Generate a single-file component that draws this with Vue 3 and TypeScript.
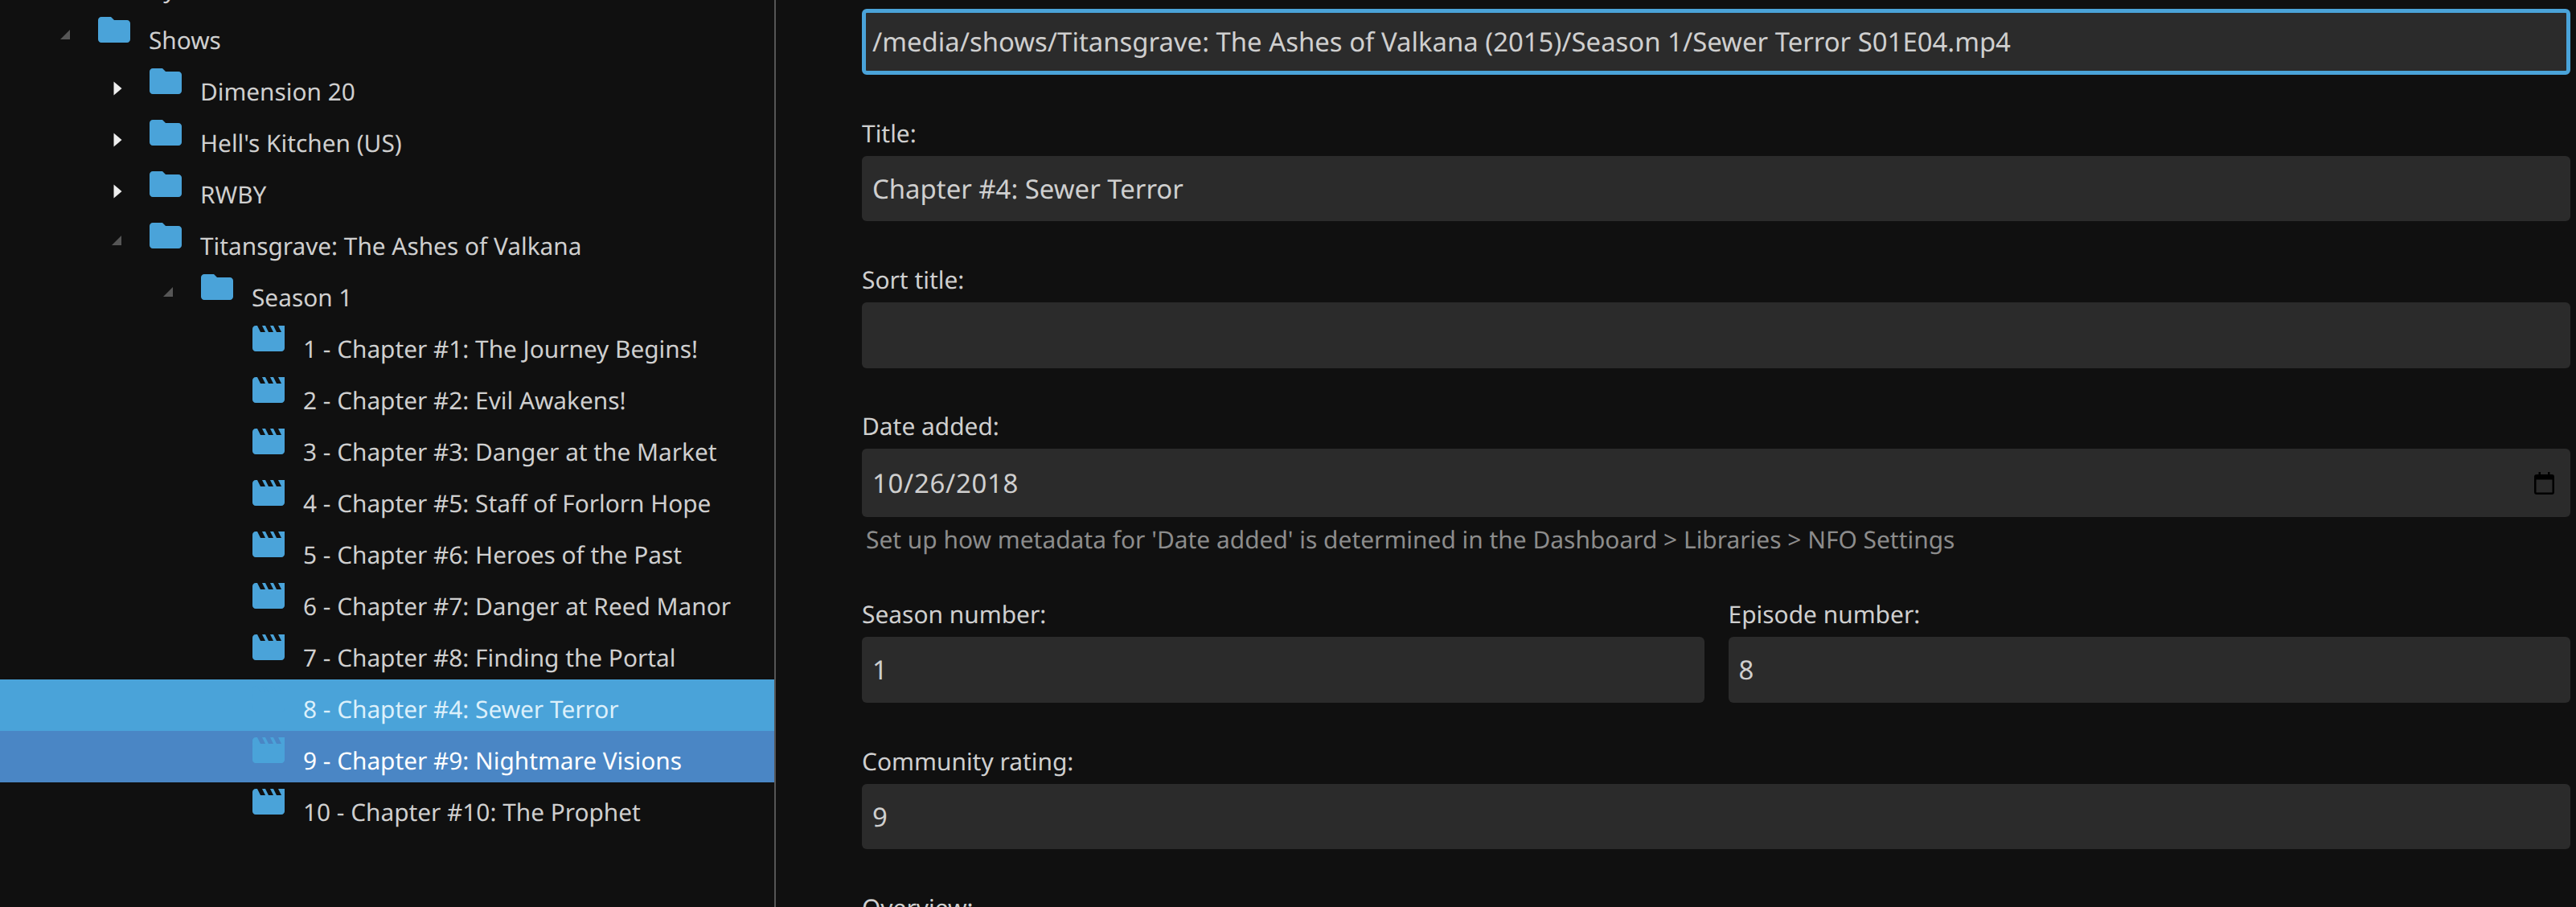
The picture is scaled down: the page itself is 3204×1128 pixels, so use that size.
<script setup lang="ts">
interface Row {
  level: number
  label: string
  kind: 'folder' | 'movie'
  caret?: 'open' | 'closed'
  state?: 'selected' | 'hover'
}

const rows: Row[] = [
  { level: 0, label: 'Library', kind: 'folder' },
  { level: 1, label: 'Shows', kind: 'folder', caret: 'open' },
  { level: 2, label: 'Dimension 20', kind: 'folder', caret: 'closed' },
  { level: 2, label: "Hell's Kitchen (US)", kind: 'folder', caret: 'closed' },
  { level: 2, label: 'RWBY', kind: 'folder', caret: 'closed' },
  { level: 2, label: 'Titansgrave: The Ashes of Valkana', kind: 'folder', caret: 'open' },
  { level: 3, label: 'Season 1', kind: 'folder', caret: 'open' },
  { level: 4, label: '1 - Chapter #1: The Journey Begins!', kind: 'movie' },
  { level: 4, label: '2 - Chapter #2: Evil Awakens!', kind: 'movie' },
  { level: 4, label: '3 - Chapter #3: Danger at the Market', kind: 'movie' },
  { level: 4, label: '4 - Chapter #5: Staff of Forlorn Hope', kind: 'movie' },
  { level: 4, label: '5 - Chapter #6: Heroes of the Past', kind: 'movie' },
  { level: 4, label: '6 - Chapter #7: Danger at Reed Manor', kind: 'movie' },
  { level: 4, label: '7 - Chapter #8: Finding the Portal', kind: 'movie' },
  { level: 4, label: '8 - Chapter #4: Sewer Terror', kind: 'movie', state: 'selected' },
  { level: 4, label: '9 - Chapter #9: Nightmare Visions', kind: 'movie', state: 'hover' },
  { level: 4, label: '10 - Chapter #10: The Prophet', kind: 'movie' },
]

const folderPath = 'M10 4H4c-1.1 0-2 .9-2 2v12c0 1.1.9 2 2 2h16c1.1 0 2-.9 2-2V8c0-1.1-.9-2-2-2h-8l-2-2z'
const moviePath = 'M18 4l2 4h-3l-2-4h-2l2 4h-3l-2-4H8l2 4H7L5 4H4c-1.1 0-1.99.9-1.99 2L2 18c0 1.1.9 2 2 2h16c1.1 0 2-.9 2-2V4h-4z'

const indent = (level: number) => ({ paddingLeft: `${54 + level * 64}px` })
</script>

<template>
  <div class="page">
    <aside class="tree">
      <ul class="list">
        <li
          v-for="row in rows"
          :key="row.label"
          class="row"
          :class="row.state"
          :style="indent(row.level)"
        >
          <span class="caret-slot">
            <svg v-if="row.caret === 'closed'" class="caret" width="11" height="18" viewBox="0 0 11 18">
              <polygon points="0.5,0.5 10.5,9 0.5,17.5" fill="#eeeeee" />
            </svg>
            <svg v-else-if="row.caret === 'open'" class="caret open" width="12" height="12" viewBox="0 0 12 12">
              <polygon points="12,0 12,12 0,12" fill="#565656" />
            </svg>
          </span>
          <svg class="icon" width="48" height="48" viewBox="0 0 24 24">
            <path :d="row.kind === 'folder' ? folderPath : moviePath" />
          </svg>
          <span class="label">{{ row.label }}</span>
        </li>
      </ul>
    </aside>

    <main class="form">
      <div class="field">
        <div class="input focused">/media/shows/Titansgrave: The Ashes of Valkana (2015)/Season 1/Sewer Terror S01E04.mp4</div>
      </div>
      <div class="field">
        <div class="caption">Title:</div>
        <div class="input">Chapter #4: Sewer Terror</div>
      </div>
      <div class="field">
        <div class="caption">Sort title:</div>
        <div class="input"></div>
      </div>
      <div class="field">
        <div class="caption">Date added:</div>
        <div class="input date">
          <span class="date-value">10/26/2018</span>
          <svg class="calendar" width="25" height="28" viewBox="0 0 25 28">
            <path
              fill-rule="evenodd"
              d="M3 3h2.5V0H8v3h9V0h2.5v3H22a3 3 0 0 1 3 3v19a3 3 0 0 1-3 3H3a3 3 0 0 1-3-3V6a3 3 0 0 1 3-3zM2.5 9.500V25a.5.5 0 0 0 .5.5h19a.5.5 0 0 0 .5-.5V9.500z"
            />
          </svg>
        </div>
        <div class="help">Set up how metadata for 'Date added' is determined in the Dashboard &gt; Libraries &gt; NFO Settings</div>
      </div>
      <div class="pair">
        <div class="field">
          <div class="caption">Season number:</div>
          <div class="input">1</div>
        </div>
        <div class="field">
          <div class="caption">Episode number:</div>
          <div class="input">8</div>
        </div>
      </div>
      <div class="field">
        <div class="caption">Community rating:</div>
        <div class="input">9</div>
      </div>
      <div class="field">
        <div class="caption">Overview:</div>
      </div>
    </main>
  </div>
</template>

<style scoped>
.page {
  display: grid;
  grid-template-columns: 965px 1fr;
  height: 1128px;
  overflow: hidden;
  background: #101010;
  color: #cfcfcf;
  font-family: "Noto Sans", "Open Sans", sans-serif;
  text-rendering: geometricPrecision;
}

.tree {
  border-right: 2px solid #555555;
  overflow: hidden;
}

.list {
  list-style: none;
  margin: -51px 0 0;
  padding: 0;
}

.row {
  display: flex;
  height: 64px;
  font-size: 29.8px;
}

.row.selected {
  background: #4aa3d9;
  color: #dcf0fb;
}

.row.hover {
  background: #4a86c5;
  color: #ffffff;
}

.caret-slot {
  position: relative;
  width: 0;
  flex: none;
}

.caret {
  position: absolute;
  left: -41px;
  top: 24px;
  filter: blur(0.5px);
}

.caret.open {
  left: -43px;
  top: 24px;
}

.icon {
  flex: none;
  fill: #4aa3d9;
}

.label {
  margin-left: 19px;
  line-height: 64px;
  padding-top: 5px;
  white-space: nowrap;
}

.form {
  padding: 11.2px 7px 0 107px;
}

.field {
  margin-bottom: 55.8px;
}

.caption {
  font-size: 29.92px;
  line-height: 32px;
  margin-bottom: 12px;
  padding-top: 1px;
}

.input {
  box-sizing: border-box;
  height: 81.6px;
  padding: 0 8px;
  display: flex;
  align-items: center;
  border: 5px solid transparent;
  border-radius: 6px;
  background: #2b2b2b;
  font-size: 32.9px;
  white-space: nowrap;
}

.input.focused {
  border-color: #4aa3d9;
}

.input.date {
  height: 85px;
  justify-content: space-between;
  padding-right: 15px;
}

.date-value {
  letter-spacing: 0.7px;
}

.calendar {
  fill: #000000;
}

.help {
  margin: 8px 0 1px 5px;
  font-size: 29.92px;
  line-height: 40px;
  color: #8c8c8c;
}

.pair {
  display: grid;
  grid-template-columns: 1fr 1fr;
  column-gap: 30px;
}
</style>
